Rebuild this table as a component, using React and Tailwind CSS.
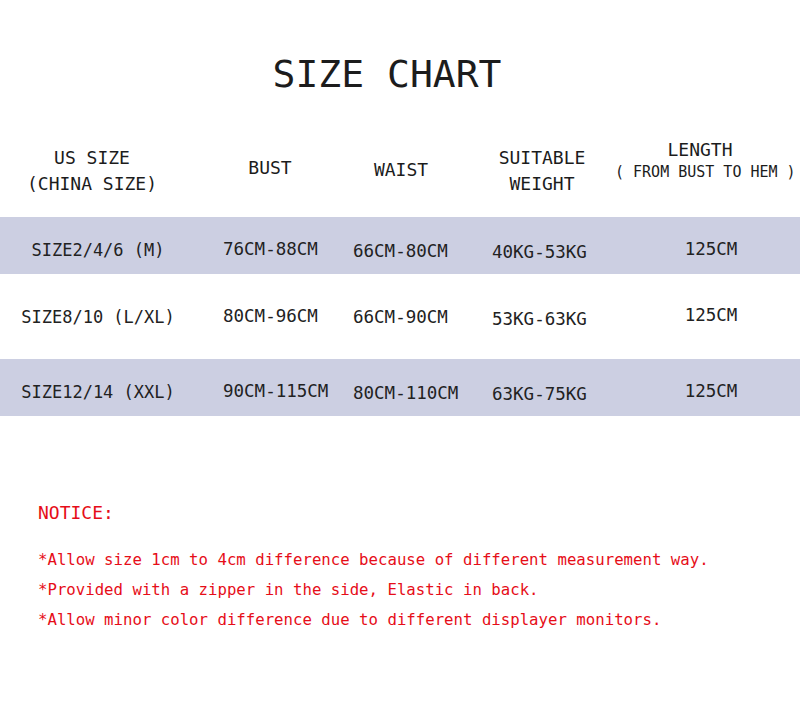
import React from 'react';

const rows = [
    { size: 'SIZE2/4/6 (M)', bust: '76CM-88CM', waist: '66CM-80CM', weight: '40KG-53KG', length: '125CM', band: true, pad: 'pt-[9px]' },
    { size: 'SIZE8/10 (L/XL)', bust: '80CM-96CM', waist: '66CM-90CM', weight: '53KG-63KG', length: '125CM', band: false, pad: 'pt-0' },
    { size: 'SIZE12/14 (XXL)', bust: '90CM-115CM', waist: '80CM-110CM', weight: '63KG-75KG', length: '125CM', band: true, pad: 'pt-[9px]' },
];

const notes = [
    '*Allow size 1cm to 4cm difference because of different measurement way.',
    '*Provided with a zipper in the side, Elastic in back.',
    '*Allow minor color difference due to different displayer monitors.',
];

export default function App() {
    return (
        <div className="w-[800px] h-[721px] bg-white text-[#1c1c1c] font-['DejaVu_Sans_Mono',monospace] overflow-hidden">
            <h1 className="pt-[55px] text-center text-[38px] leading-none font-normal pr-[26px]">
                SIZE CHART
            </h1>

            {/* header */}
            <div className="mt-[32px] h-[92px] grid grid-cols-[200px_140px_135px_140px_185px] items-center text-[18px]">
                <div className="text-center pr-[16px] leading-[26px]">
                    <div>US SIZE</div>
                    <div>(CHINA SIZE)</div>
                </div>
                <div className="text-center leading-[26px] pb-[6px]">BUST</div>
                <div className="text-center pr-[13px] leading-[26px] pb-[2px]">WAIST</div>
                <div className="text-center pr-[6px] leading-[26px]">
                    <div>SUITABLE</div>
                    <div>WEIGHT</div>
                </div>
                <div className="text-center leading-[23px] pb-[21px] whitespace-nowrap">
                    <div className="pr-[15px]">LENGTH</div>
                    <div className="text-[15px] pr-[6px]">( FROM BUST TO HEM )</div>
                </div>
            </div>

            {/* rows */}
            {rows.map((r, i) => (
                <div
                    key={i}
                    className={`grid grid-cols-[200px_140px_135px_140px_185px] items-center text-[17.5px] leading-[22px] text-[#222] ${r.pad} ${r.band ? 'bg-[#cccfe2] h-[57px]' : 'bg-white h-[85px]'}`}
                >
                    <div className="text-center pr-[4px] text-[17px]">{r.size}</div>
                    <div className="pl-[23px] pb-[2px]">{r.bust}</div>
                    <div className="pl-[13px] pt-[1px]">{r.waist}</div>
                    <div className="pl-[17px] pt-[4px]">{r.weight}</div>
                    <div className="text-center pl-[7px] pb-[3px]">{r.length}</div>
                </div>
            ))}

            {/* notice */}
            <div className="pl-[38px] text-[#e60d18]">
                <div className="mt-[82px] text-[18px] leading-[30px]">NOTICE:</div>
                <div className="mt-[17px] text-[15.7px] leading-[30px]">
                    {notes.map((n, i) => (
                        <div key={i}>{n}</div>
                    ))}
                </div>
            </div>
        </div>
    );
}
